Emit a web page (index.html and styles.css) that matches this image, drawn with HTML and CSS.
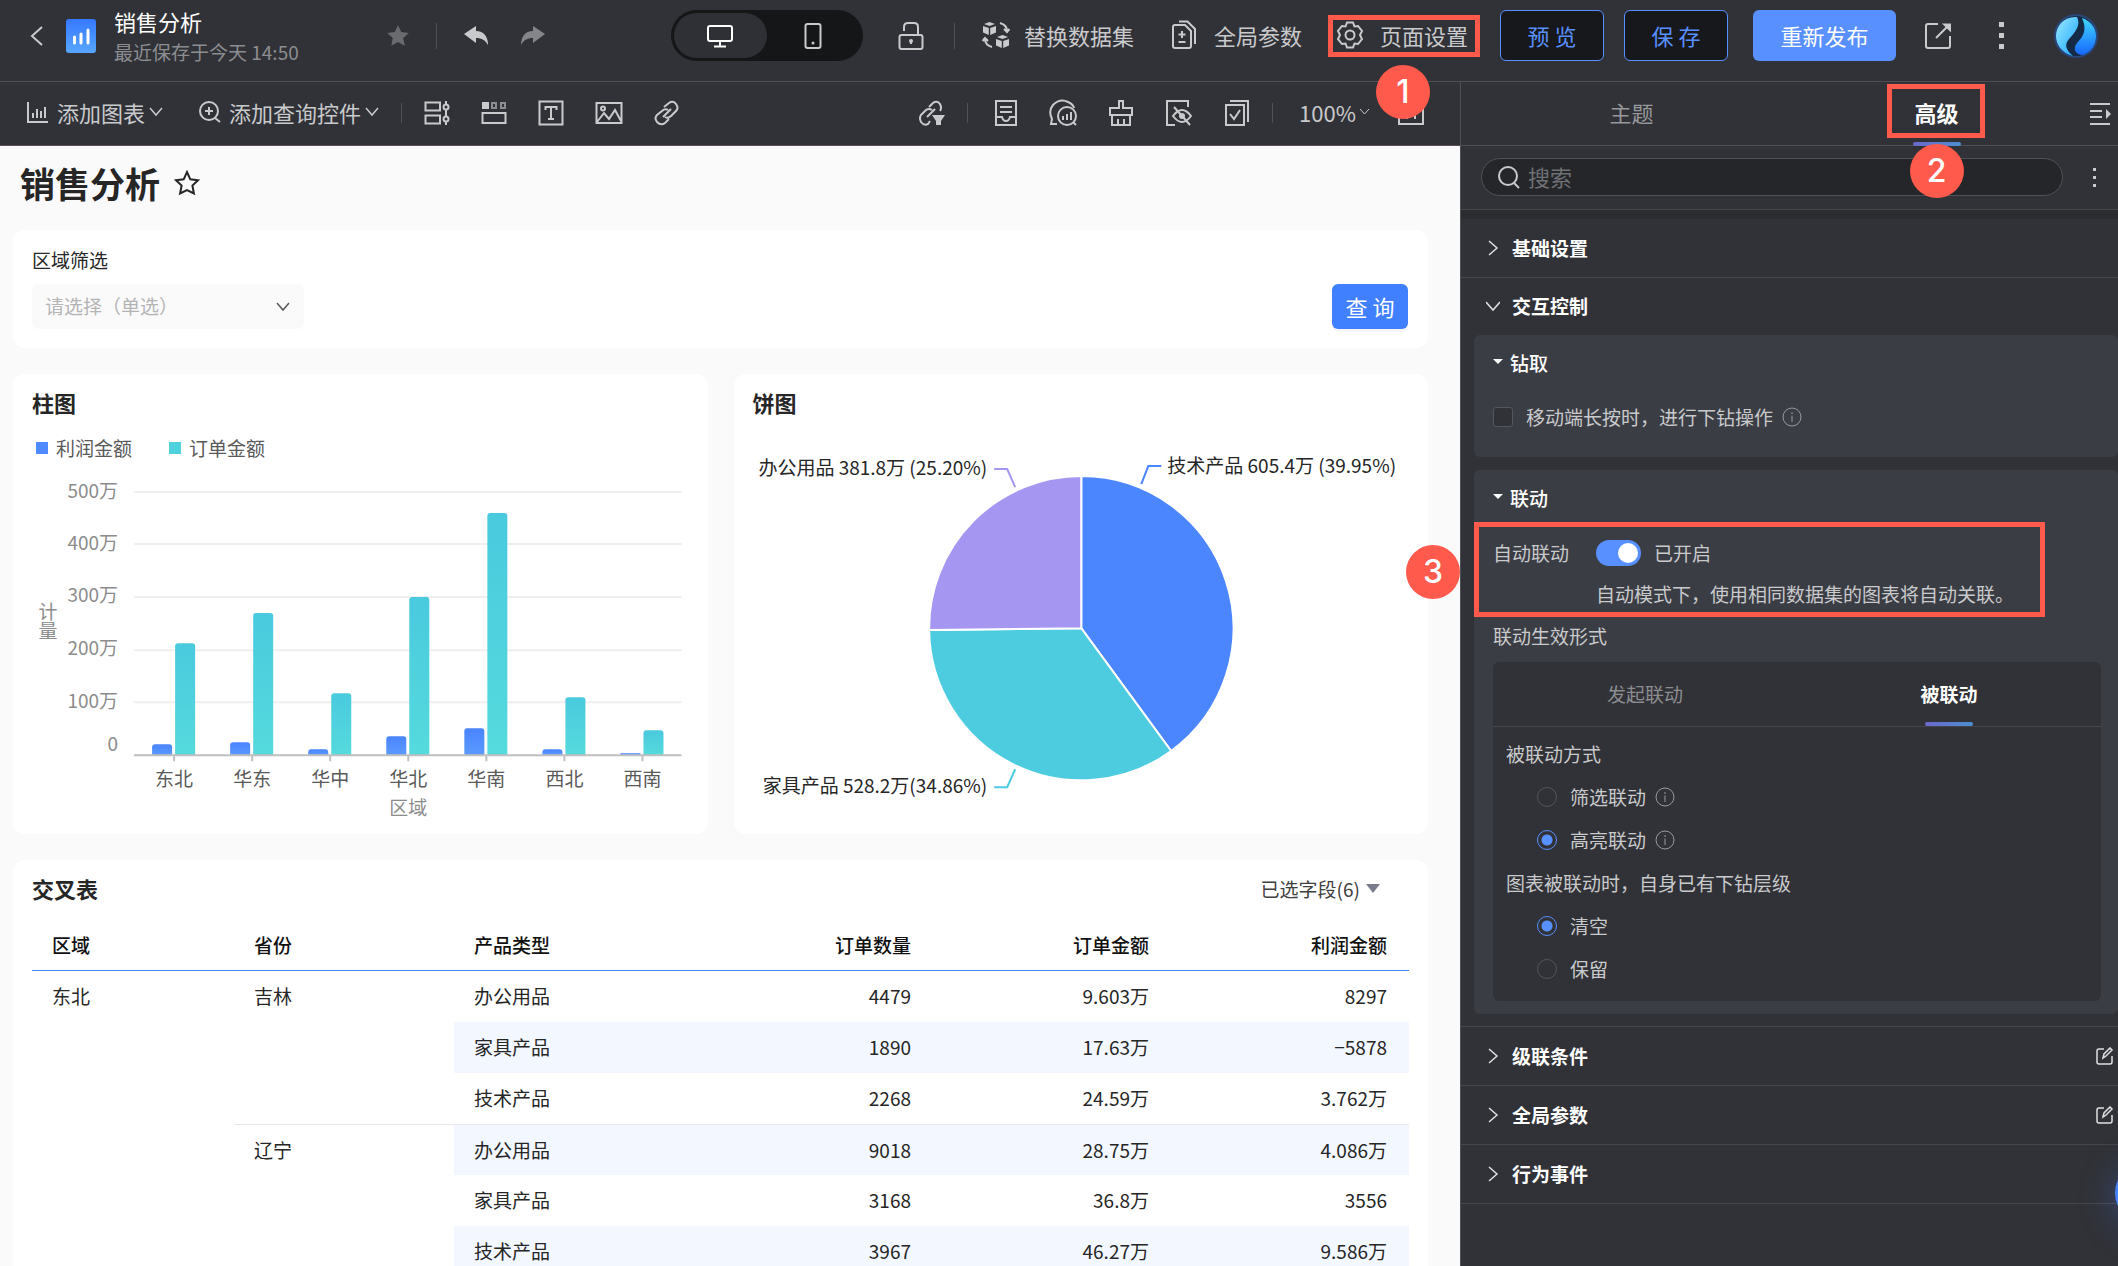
FILE: index.html
```html
<!DOCTYPE html>
<html lang="zh-CN">
<head>
    <meta charset="UTF-8">
    <meta name="viewport" content="width=device-width, initial-scale=1.0">
    <title>销售分析</title>
    <link rel="stylesheet" href="styles.css">
</head>
<body>

    <header class="header">
        <div class="header-left">
            <button class="icon-btn back" aria-label="返回">
                <svg width="14" height="22" viewBox="0 0 14 22"><path d="M12 2 2 11l10 9"/></svg>
            </button>
            <svg class="app-logo" width="30" height="34" viewBox="0 0 30 34">
                <defs>
                    <linearGradient id="logoFill" x1="0" y1="0" x2="0" y2="1">
                        <stop offset="0" stop-color="#3678ff"/>
                        <stop offset="1" stop-color="#57a6ff"/>
                    </linearGradient>
                </defs>
                <rect width="30" height="34" rx="3" fill="url(#logoFill)" stroke="none"/>
                <path d="M8.500 18v6M15 15v9M22 11v13" stroke="#fff" stroke-width="3" stroke-linecap="round"/>
            </svg>
            <div class="doc">
                <div class="doc-name">销售分析</div>
                <div class="doc-time">最近保存于今天 14:50</div>
            </div>
            <button class="icon-btn star" aria-label="收藏">
                <svg width="24" height="24" viewBox="0 0 24 24"><path class="solid" d="m12 1 3.200 7 7.600.900-5.600 5.200 1.500 7.600L12 18l-6.700 3.700 1.500-7.600L1.200 8.900l7.600-.900z"/></svg>
            </button>
            <span class="divider"></span>
            <button class="icon-btn undo" aria-label="撤销">
                <svg width="26" height="22" viewBox="0 0 26 22"><path class="solid" d="M1 9 13 1v5c8 0 12 6 12 14-3-5-6-7-12-7v5z"/></svg>
            </button>
            <button class="icon-btn redo" aria-label="重做" disabled>
                <svg width="26" height="22" viewBox="0 0 26 22"><path class="solid" d="M25 9 13 1v5C5 6 1 12 1 20c3-5 6-7 12-7v5z"/></svg>
            </button>
        </div>

        <div class="device-switch">
            <button class="device active" aria-label="电脑">
                <svg width="28" height="24" viewBox="0 0 28 24"><rect x="2" y="2" width="24" height="15" rx="2"/><path d="M14 17v5M8 22.500h12"/></svg>
            </button>
            <button class="device" aria-label="手机">
                <svg width="18" height="28" viewBox="0 0 18 28"><rect x="1.500" y="2" width="15" height="24" rx="2"/><circle class="solid" cx="9" cy="21" r="1.500"/></svg>
            </button>
        </div>

        <button class="icon-btn lock" aria-label="锁定">
            <svg width="26" height="30" viewBox="0 0 26 30"><rect x="1.500" y="14" width="23" height="14" rx="2"/><path d="M6 10V6q0-4 4-4h6q4 0 4 4v8M13 19v4"/><circle class="solid" cx="13" cy="20" r="2"/></svg>
        </button>
        <span class="divider"></span>

        <button class="header-btn dataset">
            <svg width="28" height="28" viewBox="0 0 28 28">
                <path class="solid" d="m7.500 1 5.500 2-5.500 2L2 3zM1 5l5.800 2v7L1 11.500zM14 5 8.200 7v7l5.800-2.500zM20.500 14l5.500 2-5.500 2-5.500-2zM14 18l5.800 2v7L14 24.500zM27 18l-5.800 2v7l5.800-2.500z"/>
                <path d="M18 2q7 2 7 8M22 8l3 3 2.500-3M10 26q-7-2-7-8M.500 20 3 17l3 3"/>
            </svg>
            替换数据集
        </button>
        <button class="header-btn params">
            <svg width="28" height="30" viewBox="0 0 28 30"><path d="M7 5h8l6 6v15q0 2-2 2H5q-2 0-2-2V7q0-2 2-2zM9 1.500h8.500L25 9v15M12 11v7M8.500 14.500h7M8.500 22h7"/></svg>
            全局参数
        </button>
        <button class="header-btn page-setting">
            <svg width="28" height="28" viewBox="0 0 28 28"><path d="M11 1.500h6l1.500 4 3.500-.500 4 5-2 4 2 4-4 5-3.500-.500-1.500 4h-6l-1.500-4L6 23l-4-5 2-4-2-4 4-5 3.500.500z"/><circle cx="14" cy="14" r="4.500"/></svg>
            页面设置
            <span class="mark-box"></span>
            <span class="mark-num">1</span>
        </button>

        <button class="btn outline">预 览</button>
        <button class="btn outline save">保 存</button>
        <button class="btn primary">重新发布</button>

        <button class="icon-btn export" aria-label="打开">
            <svg width="28" height="28" viewBox="0 0 28 28"><path d="M14 2H4Q2 2 2 4v20q0 2 2 2h20q2 0 2-2V14M12 16 25 3"/><path class="solid" d="M18 1.500h9v9z"/></svg>
        </button>
        <button class="icon-btn more" aria-label="更多">
            <svg width="6" height="30" viewBox="0 0 6 30"><path class="solid" d="M0 1h5v5H0zM0 12h5v5H0zM0 23h5v5H0z"/></svg>
        </button>
        <svg class="avatar" width="44" height="46" viewBox="0 0 44 46">
            <defs>
                <linearGradient id="avatarA" x1="0" y1="0" x2="1" y2="1">
                    <stop offset="0" stop-color="#9beaff"/>
                    <stop offset="1" stop-color="#16a3ff"/>
                </linearGradient>
                <linearGradient id="avatarB" x1="0" y1="0" x2="0" y2="1">
                    <stop offset="0" stop-color="#3fd6ff"/>
                    <stop offset="1" stop-color="#1766ff"/>
                </linearGradient>
            </defs>
            <circle cx="22" cy="23" r="22" fill="#29477c" stroke="none"/>
            <circle cx="22" cy="23" r="20" fill="#152a45" stroke="none"/>
            <path d="M23 4C11 3 2 12 2 23c0 9 6 17 17 20-7-6-9-11-4-17 7-7 12-15 8-22z" fill="url(#avatarA)" stroke="none"/>
            <path d="M28 5c9 3 14 10 14 18 0 9-5 16-13 19-7 0-11-6-6-12 7-7 10-14 5-25z" fill="url(#avatarB)" stroke="none"/>
        </svg>
    </header>

    <div class="workspace">
        <main class="editor">
            <div class="toolbar">
                <button class="tool-btn">
                    <svg width="22" height="24" viewBox="0 0 22 24"><path d="M1 2v20h20M6 13v5M10 9v9M14 11v7M18 7v11"/></svg>
                    添加图表
                    <svg class="caret" width="14" height="10" viewBox="0 0 14 10"><path d="m1 1 6 7 6-7"/></svg>
                </button>
                <button class="tool-btn query">
                    <svg width="22" height="24" viewBox="0 0 22 24"><circle cx="10" cy="11" r="9"/><path d="m16 18 5 4M10 7v8M6 11h8"/></svg>
                    添加查询控件
                    <svg class="caret" width="14" height="10" viewBox="0 0 14 10"><path d="m1 1 6 7 6-7"/></svg>
                </button>
                <span class="divider small"></span>
                <div class="tools">
                    <button class="icon-btn" aria-label="控件组">
                        <svg width="26" height="26" viewBox="0 0 26 26"><path d="M1.500 2.500H16v8H1.500zM1.500 15.500H16v8H1.500zM22 1v24"/><circle class="knob" cx="22" cy="7" r="2.500"/><circle class="knob" cx="22" cy="19" r="2.500"/></svg>
                    </button>
                    <button class="icon-btn" aria-label="标签页">
                        <svg width="26" height="26" viewBox="0 0 26 26"><path class="solid" d="M1 2h7v7H1z"/><path class="dim" d="M11 3h4v5h-4zM20 3h4v5h-4z"/><path d="M1.500 13h23v10h-23z"/></svg>
                    </button>
                    <button class="icon-btn" aria-label="文本">
                        <svg width="26" height="26" viewBox="0 0 26 26"><path d="M1.500 1.500h23v23h-23zM7.500 10V7h11v3M13 7v12M10 19h6"/></svg>
                    </button>
                    <button class="icon-btn" aria-label="图片">
                        <svg width="28" height="26" viewBox="0 0 28 26"><path d="M1.500 3h25v20h-25zM2 22l7-9 5 6 6-9 6 11"/><circle cx="8" cy="8.500" r="2"/></svg>
                    </button>
                    <button class="icon-btn" aria-label="链接">
                        <svg width="26" height="26" viewBox="0 0 26 26"><path d="m10 7 5-4q4-3 7 1 3 4 0 7l-5 5q-3 3-6 1M15 19l-4 4q-4 3-8-1-3-4 0-7l5-4q3-3 6-1M9 17l8-8"/></svg>
                    </button>
                </div>

                <div class="tools right">
                    <button class="icon-btn" aria-label="联动过滤">
                        <svg width="26" height="26" viewBox="0 0 26 26"><path d="m10 7 4-4q4-3 7 1 2 4 0 7M11 21l-2 3q-4 2-7-2-2-4 0-7l5-5q3-2 6 0M8 17l8-8"/><path class="solid" d="M13 15h13l-4 6v4h-5v-4z"/></svg>
                    </button>
                    <span class="divider small"></span>
                    <button class="icon-btn" aria-label="收件">
                        <svg width="24" height="28" viewBox="0 0 24 28"><path d="M2 2h20v24H2zM6 8h12M6 13h12M2 18h6q1 4 4 4t4-4h6"/></svg>
                    </button>
                    <button class="icon-btn" aria-label="智能分析">
                        <svg width="28" height="28" viewBox="0 0 28 28"><path d="M8 25H2l1-5Q-1 12 4 6q7-7 15-3 5 2 6 6"/><circle cx="18" cy="17" r="9"/><path d="m24 23 3 3M14 17v4M18 15v6M22 13v8"/></svg>
                    </button>
                    <button class="icon-btn" aria-label="清除">
                        <svg width="26" height="28" viewBox="0 0 26 28"><path d="M11 9V2h4v7h9v7H2V9zM4 16v10h18V16M10 20v6M16 20v6"/></svg>
                    </button>
                    <button class="icon-btn" aria-label="隐藏">
                        <svg width="28" height="28" viewBox="0 0 28 28"><path d="M10 26H2V2h21v6M8 17q9-12 18 0-9 12-18 0zM9 8l16 18"/><circle class="solid" cx="17" cy="17" r="3"/></svg>
                    </button>
                    <button class="icon-btn" aria-label="多选">
                        <svg width="26" height="28" viewBox="0 0 26 28"><path d="M2 6h18v20H2zM6 2h18v21M6 15l4 5 6-9"/></svg>
                    </button>
                    <span class="divider small"></span>
                    <button class="zoom">100%<svg width="11" height="8" viewBox="0 0 11 8"><path d="m1 1 4.500 5L10 1"/></svg></button>
                    <button class="icon-btn" aria-label="网格">
                        <svg width="26" height="24" viewBox="0 0 26 24"><path d="M1 1h24v22H1zM9 8v10M17 8v10"/></svg>
                    </button>
                </div>
            </div>

            <div class="canvas">
                <div class="page-title">
                    <h1>销售分析</h1>
                    <svg width="26" height="26" viewBox="0 0 26 26"><path d="m13 2 3.300 7.300 7.700.900-5.600 5.300 1.500 8L13 20l-6.900 3.500 1.500-8L2 10.200l7.700-.900z"/></svg>
                </div>

                <section class="card filter">
                    <div>
                        <label for="region">区域筛选</label>
                        <div class="select">
                            <select id="region"><option>请选择（单选）</option></select>
                            <svg width="14" height="10" viewBox="0 0 14 10"><path d="m1 1 6 7 6-7"/></svg>
                        </div>
                    </div>
                    <button class="btn-query">查 询</button>
                </section>

                <div class="charts">
                    <section class="card">
                        <h2>柱图</h2>
                        <div class="legend">
                            <span class="legend-item profit">利润金额</span>
                            <span class="legend-item order">订单金额</span>
                        </div>
                        <svg class="chart" viewBox="0 0 656 352">
                            <defs>
                                <linearGradient id="profit" x1="0" y1="0" x2="0" y2="1">
                                    <stop offset="0" stop-color="#4a84ff"/>
                                    <stop offset="1" stop-color="#5b9aff"/>
                                </linearGradient>
                                <linearGradient id="order" x1="0" y1="0" x2="0" y2="1">
                                    <stop offset="0" stop-color="#4acade"/>
                                    <stop offset="1" stop-color="#55dadd"/>
                                </linearGradient>
                            </defs>
                            <path class="grid" d="M102 22h547M102 74h547M102 127h547M102 180h547M102 232h547"/>
                            <g fill="url(#profit)">
                                <path d="M120 285v-8q0-3 3-3h14q3 0 3 3v8z"/>
                                <path d="M198 285v-10q0-3 3-3h14q3 0 3 3v10z"/>
                                <path d="M276 285v-3q0-3 3-3h14q3 0 3 3v3z"/>
                                <path d="M354 285v-16q0-3 3-3h14q3 0 3 3v16z"/>
                                <path d="M432 285v-24q0-3 3-3h14q3 0 3 3v24z"/>
                                <path d="M510 285v-3q0-3 3-3h14q3 0 3 3v3z"/>
                                <path d="M588 285v-2h20v2z"/>
                            </g>
                            <g fill="url(#order)">
                                <path d="M143 285V176q0-3 3-3h14q3 0 3 3v109z"/>
                                <path d="M221 285V146q0-3 3-3h14q3 0 3 3v139z"/>
                                <path d="M299 285v-59q0-3 3-3h14q3 0 3 3v59z"/>
                                <path d="M377 285V130q0-3 3-3h14q3 0 3 3v155z"/>
                                <path d="M455 285V46q0-3 3-3h14q3 0 3 3v239z"/>
                                <path d="M533 285v-55q0-3 3-3h14q3 0 3 3v55z"/>
                                <path d="M611 285v-22q0-3 3-3h14q3 0 3 3v22z"/>
                            </g>
                            <path class="axis" d="M102 285h547M142 285v6M220 285v6M298 285v6M376 285v6M454 285v6M532 285v6M610 285v6"/>
                            <g class="y-label">
                                <text x="86" y="28">500万</text>
                                <text x="86" y="80">400万</text>
                                <text x="86" y="132">300万</text>
                                <text x="86" y="185">200万</text>
                                <text x="86" y="238">100万</text>
                                <text x="86" y="281">0</text>
                            </g>
                            <g class="x-label">
                                <text x="142" y="316">东北</text>
                                <text x="220" y="316">华东</text>
                                <text x="298" y="316">华中</text>
                                <text x="376" y="316">华北</text>
                                <text x="454" y="316">华南</text>
                                <text x="532" y="316">西北</text>
                                <text x="610" y="316">西南</text>
                            </g>
                            <g class="axis-title">
                                <text x="376" y="345">区域</text>
                                <text x="16" y="149">计<tspan x="16" dy="19">量</tspan></text>
                            </g>
                        </svg>
                    </section>

                    <section class="card">
                        <h2>饼图</h2>
                        <svg class="chart pie" viewBox="0 0 656 398">
                            <g class="slices">
                                <path fill="#4b86ff" d="M328 204V52A152 152 0 0 1 417.800 326.700z"/>
                                <path fill="#4dcbdf" d="M328 204l89.800 122.700A152 152 0 0 1 176 205.900z"/>
                                <path fill="#a596f2" d="M328 204l-152 1.900A152 152 0 0 1 328 52z"/>
                            </g>
                            <path class="lead office" d="M241 45h13l8 18"/>
                            <path class="lead tech" d="M388 60l7-18h13"/>
                            <path class="lead furniture" d="M241 363h13l8-18"/>
                            <text x="234" y="51" text-anchor="end">办公用品 381.8万 (25.20%)</text>
                            <text x="414" y="49">技术产品 605.4万 (39.95%)</text>
                            <text x="234" y="369" text-anchor="end">家具产品 528.2万(34.86%)</text>
                        </svg>
                    </section>
                </div>

                <section class="card cross">
                    <div class="cross-head">
                        <h2>交叉表</h2>
                        <button class="fields">已选字段(6)</button>
                    </div>
                    <table>
                        <colgroup>
                            <col class="c-region"><col class="c-province"><col><col><col class="c-num"><col class="c-num">
                        </colgroup>
                        <thead>
                            <tr>
                                <th>区域</th>
                                <th>省份</th>
                                <th>产品类型</th>
                                <th class="num">订单数量</th>
                                <th class="num">订单金额</th>
                                <th class="num">利润金额</th>
                            </tr>
                        </thead>
                        <tbody>
                            <tr>
                                <td rowspan="6">东北</td>
                                <td rowspan="3">吉林</td>
                                <td>办公用品</td>
                                <td class="num">4479</td>
                                <td class="num">9.603万</td>
                                <td class="num">8297</td>
                            </tr>
                            <tr class="odd">
                                <td>家具产品</td>
                                <td class="num">1890</td>
                                <td class="num">17.63万</td>
                                <td class="num">−5878</td>
                            </tr>
                            <tr>
                                <td>技术产品</td>
                                <td class="num">2268</td>
                                <td class="num">24.59万</td>
                                <td class="num">3.762万</td>
                            </tr>
                            <tr class="odd group">
                                <td rowspan="3" class="plain">辽宁</td>
                                <td>办公用品</td>
                                <td class="num">9018</td>
                                <td class="num">28.75万</td>
                                <td class="num">4.086万</td>
                            </tr>
                            <tr>
                                <td>家具产品</td>
                                <td class="num">3168</td>
                                <td class="num">36.8万</td>
                                <td class="num">3556</td>
                            </tr>
                            <tr class="odd">
                                <td>技术产品</td>
                                <td class="num">3967</td>
                                <td class="num">46.27万</td>
                                <td class="num">9.586万</td>
                            </tr>
                        </tbody>
                    </table>
                </section>
            </div>
        </main>

        <aside class="panel">
            <div class="panel-tabs">
                <button class="panel-tab">主题</button>
                <button class="panel-tab active">
                    高级
                    <span class="mark-box"></span>
                    <span class="mark-num">2</span>
                </button>
                <button class="icon-btn collapse" aria-label="收起">
                    <svg width="22" height="24" viewBox="0 0 22 24"><path d="M1 2h20M1 9h12M1 15h12M1 22h20"/><path class="solid" d="m17 7 5 5-5 5z"/></svg>
                </button>
            </div>

            <div class="search-row">
                <div class="search">
                    <svg width="24" height="24" viewBox="0 0 24 24"><circle cx="11" cy="11" r="9"/><path d="m17 18 5 5"/></svg>
                    <input type="text" placeholder="搜索" aria-label="搜索">
                </div>
                <button class="icon-btn" aria-label="更多">
                    <svg width="4" height="20" viewBox="0 0 4 20"><path class="solid" d="M0 1h3v3H0zM0 9h3v3H0zM0 17h3v3H0z"/></svg>
                </button>
            </div>

            <div class="sections">
                <button class="section-head">
                    <svg width="14" height="16" viewBox="0 0 14 16"><path d="m3 1 8 7-8 7"/></svg>
                    基础设置
                </button>

                <div class="section-open">
                    <button class="section-head">
                        <svg width="14" height="16" viewBox="0 0 14 16"><path d="m0 4 7 8 7-8"/></svg>
                        交互控制
                    </button>

                    <div class="box drill">
                        <h3>钻取</h3>
                        <label class="check">
                            <input type="checkbox">
                            移动端长按时，进行下钻操作
                            <svg class="info" width="20" height="20" viewBox="0 0 20 20"><circle cx="10" cy="10" r="9"/><path d="M10 8.500V15M10 5v2"/></svg>
                        </label>
                    </div>

                    <div class="box link">
                        <h3>联动</h3>
                        <div class="auto-link">
                            <label for="auto">自动联动</label>
                            <div>
                                <div class="switch-row">
                                    <input type="checkbox" class="switch" id="auto" checked>
                                    <span>已开启</span>
                                </div>
                                <p>自动模式下，使用相同数据集的图表将自动关联。</p>
                            </div>
                            <span class="mark-box"></span>
                            <span class="mark-num">3</span>
                        </div>
                        <div class="form-label">联动生效形式</div>

                        <div class="link-card">
                            <div class="link-tabs">
                                <button class="link-tab">发起联动</button>
                                <button class="link-tab active">被联动</button>
                            </div>
                            <div class="link-body">
                                <div class="group-label">被联动方式</div>
                                <label class="radio">
                                    <input type="radio" name="mode">
                                    筛选联动
                                    <svg class="info" width="20" height="20" viewBox="0 0 20 20"><circle cx="10" cy="10" r="9"/><path d="M10 8.500V15M10 5v2"/></svg>
                                </label>
                                <label class="radio">
                                    <input type="radio" name="mode" checked>
                                    高亮联动
                                    <svg class="info" width="20" height="20" viewBox="0 0 20 20"><circle cx="10" cy="10" r="9"/><path d="M10 8.500V15M10 5v2"/></svg>
                                </label>
                                <div class="group-label">图表被联动时，自身已有下钻层级</div>
                                <label class="radio">
                                    <input type="radio" name="level" checked>
                                    清空
                                </label>
                                <label class="radio">
                                    <input type="radio" name="level">
                                    保留
                                </label>
                            </div>
                        </div>
                    </div>
                </div>

                <button class="section-head">
                    <svg width="14" height="16" viewBox="0 0 14 16"><path d="m3 1 8 7-8 7"/></svg>
                    级联条件
                    <svg class="edit" width="18" height="18" viewBox="0 0 18 18"><path d="M8 2H3Q1 2 1 4v11q0 2 2 2h11q2 0 2-2V9M7 11l1-4 6-6 2 2-6 6z"/></svg>
                </button>
                <button class="section-head">
                    <svg width="14" height="16" viewBox="0 0 14 16"><path d="m3 1 8 7-8 7"/></svg>
                    全局参数
                    <svg class="edit" width="18" height="18" viewBox="0 0 18 18"><path d="M8 2H3Q1 2 1 4v11q0 2 2 2h11q2 0 2-2V9M7 11l1-4 6-6 2 2-6 6z"/></svg>
                </button>
                <button class="section-head">
                    <svg width="14" height="16" viewBox="0 0 14 16"><path d="m3 1 8 7-8 7"/></svg>
                    行为事件
                </button>
            </div>
            <button class="helper" aria-label="助手"></button>
        </aside>
    </div>

</body>
</html>
```
FILE: styles.css
```css
* {
    box-sizing: border-box;
}
body {
    margin: 0;
    height: 100vh;
    display: flex;
    flex-direction: column;
    overflow: hidden;
    font-family: "Noto Sans CJK SC", sans-serif;
    font-size: 19px;
    line-height: 28px;
    color: #262626;
    background-color: #313237;
}
button, input, select {
    font: inherit;
    color: inherit;
}
button {
    margin: 0;
    padding: 0;
    border: none;
    background: none;
    cursor: pointer;
}
h1, h2, h3, p {
    margin: 0;
}
svg {
    display: block;
    flex: none;
    fill: none;
    stroke: currentColor;
    stroke-width: 2;
}
svg .solid {
    fill: currentColor;
    stroke: none;
}
svg .dim {
    opacity: 0.6;
}
.icon-btn {
    display: flex;
    align-items: center;
    justify-content: center;
    color: #c9cacc;
}
.divider {
    flex: none;
    width: 1px;
    height: 26px;
    background-color: #505156;
}
.divider.small {
    height: 20px;
}

/* header */
.header {
    display: flex;
    align-items: center;
    flex: none;
    height: 82px;
    padding: 0 20px 10px 30px;
    border-bottom: 1px solid #505156;
    font-size: 22px;
    color: #c9cacc;
}
.header-left {
    display: flex;
    align-items: center;
    flex: 1;
}
.app-logo {
    margin: 0 18px 0 22px;
}
.doc {
    width: 272px;
    white-space: nowrap;
}
.doc-name {
    line-height: 30px;
    color: #fff;
}
.doc-time {
    padding-top: 2px;
    font-size: 19px;
    color: #8c8d90;
}
.icon-btn.star {
    color: #6a6b6f;
    margin-right: 26px;
}
.undo {
    margin: 0 31px 0 26px;
}
.redo {
    color: #85868a;
}
.device-switch {
    display: flex;
    width: 192px;
    height: 51px;
    padding: 3px;
    border-radius: 26px;
    background-color: #151618;
}
.device {
    display: flex;
    flex: 1;
    align-items: center;
    justify-content: center;
    border-radius: 23px;
}
.device.active {
    color: #fff;
    background-color: #2f3035;
}
.lock {
    margin: 0 30px 0 35px;
}
.header-btn {
    display: flex;
    align-items: center;
    gap: 16px;
    position: relative;
    padding-bottom: 2px;
    white-space: nowrap;
}
.dataset {
    gap: 14px;
    margin-left: 27px;
}
.params {
    margin: 0 34px 0 36px;
}
.btn {
    height: 51px;
    width: 104px;
    padding-bottom: 2px;
    border-radius: 6px;
    white-space: nowrap;
}
.btn.outline {
    margin-left: 32px;
    border: 1px solid #5990ff;
    background-color: #17181b;
    color: #5990ff;
}
.btn.save {
    margin-left: 20px;
}
.btn.primary {
    width: 143px;
    margin-left: 25px;
    background-color: #5990ff;
    color: #fff;
}
.export {
    margin: 0 47px 0 28px;
}
.more {
    margin-right: 49px;
}

/* numbered callouts */
.mark-box {
    position: absolute;
    border: 5px solid #ff5a4b;
    pointer-events: none;
}
.mark-num {
    position: absolute;
    z-index: 2;
    width: 54px;
    height: 54px;
    border-radius: 50%;
    background-color: #ff5a4b;
    color: #fff;
    font: 500 32px/54px Inter, sans-serif;
    text-align: center;
}
.page-setting .mark-box {
    inset: -6px -12px -6px -8px;
}
.page-setting .mark-num {
    left: 40px;
    top: 44px;
}

.workspace {
    display: flex;
    flex: 1;
    min-height: 0;
}
.editor {
    flex: 1;
    min-width: 0;
    display: flex;
    flex-direction: column;
}

/* toolbar */
.toolbar {
    display: flex;
    align-items: center;
    flex: none;
    height: 64px;
    padding: 0 36px 2px 27px;
    border-bottom: 1px solid #5b505a;
    color: #c9cacc;
    font-size: 22px;
}
.tool-btn {
    display: flex;
    align-items: center;
    gap: 8px;
    padding-bottom: 2px;
    white-space: nowrap;
}
.caret, .select svg, .section-head svg {
    stroke-width: 1.5;
}
.tool-btn .caret {
    margin-left: -4px;
}
.tool-btn.query {
    margin: 0 22px 0 36px;
}
.tools {
    display: flex;
    align-items: center;
    gap: 31px;
    margin-left: 22px;
}
.tools.right {
    margin-left: auto;
}
.tools.right .divider {
    margin: 0 -5px 0 -9px;
}
.knob {
    fill: #313237;
}
.zoom {
    display: flex;
    align-items: center;
    gap: 3px;
    margin-right: -3px;
    padding-bottom: 2px;
}
.zoom svg {
    stroke-width: 1;
}

/* canvas */
.canvas {
    flex: 1;
    min-height: 0;
    overflow: hidden;
    display: flex;
    flex-direction: column;
    gap: 26px;
    padding: 14px 32px 0 13px;
    background-color: #fafafa;
}
.page-title {
    display: flex;
    align-items: center;
    gap: 14px;
    height: 44px;
    padding: 2px 0 0 7px;
}
h1 {
    font-size: 35px;
    line-height: 44px;
    font-weight: 600;
}
h2 {
    font-size: 22px;
    line-height: 30px;
    font-weight: 600;
}
.card {
    flex: none;
    padding: 13px 19px 12px;
    border-radius: 12px;
    background-color: #fff;
}
.filter {
    display: flex;
    justify-content: space-between;
    align-items: flex-end;
    padding: 16px 20px 19px 19px;
}
.filter label {
    display: block;
    margin-bottom: 10px;
}
.select {
    position: relative;
    width: 272px;
}
.select select {
    appearance: none;
    display: block;
    width: 100%;
    height: 45px;
    padding: 0 13px 2px;
    border: none;
    border-radius: 6px;
    background-color: #fafafa;
    color: #b4b4b4;
}
.select svg {
    position: absolute;
    right: 14px;
    top: 18px;
    color: #595959;
    pointer-events: none;
}
.btn-query {
    width: 76px;
    height: 45px;
    padding-bottom: 2px;
    border-radius: 6px;
    background-color: #4080ff;
    box-shadow: 0 3px 0 rgba(0, 0, 0, 0.04);
    color: #fff;
    font-size: 22px;
}
.charts {
    display: grid;
    grid-template-columns: 1fr 1fr;
    gap: 26px;
}
.legend {
    display: flex;
    gap: 37px;
    margin: 17px 0 8px 4px;
    color: #595959;
}
.legend-item {
    display: flex;
    align-items: center;
    gap: 8px;
}
.legend-item::before {
    content: "";
    width: 12px;
    height: 12px;
    background-color: #4f8bff;
}
.legend-item.order::before {
    background-color: #50d2de;
}
.chart {
    width: 100%;
}
.chart.pie {
    margin-top: 7px;
}
.chart * {
    stroke: none;
}
.chart text {
    fill: #262626;
    font-size: 19px;
}
.chart .grid {
    stroke: #efefef;
}
.chart .axis {
    stroke: #bfbfbf;
}
.chart .y-label text {
    fill: #8c8c8c;
    text-anchor: end;
}
.chart .x-label text {
    fill: #595959;
    text-anchor: middle;
}
.chart .axis-title text {
    fill: #8c8c8c;
    text-anchor: middle;
}
.slices path {
    stroke: #fff;
    stroke-width: 2;
}
.lead.office {
    stroke: #a596f2;
}
.lead.tech {
    stroke: #4b86ff;
}
.lead.furniture {
    stroke: #4dcbdf;
}

/* cross table */
.cross-head {
    display: flex;
    justify-content: space-between;
    align-items: center;
    padding-right: 29px;
}
.fields {
    display: flex;
    align-items: center;
    gap: 6px;
    padding-top: 1px;
    color: #404040;
}
.fields::after {
    content: "";
    border: 7px solid transparent;
    border-top: 9px solid #7a7c8c;
    border-bottom: none;
}
table {
    width: 100%;
    margin-top: 17px;
    border-collapse: separate;
    border-spacing: 0;
    table-layout: fixed;
}
.c-region {
    width: 202px;
}
.c-province {
    width: 220px;
}
.c-num {
    width: 238px;
}
th, td {
    height: 51px;
    padding: 11px 22px 11px 20px;
    text-align: left;
    vertical-align: top;
    font-weight: 400;
}
th {
    font-weight: 500;
    color: #111;
    border-bottom: 1px solid #4080ff;
}
th.num, td.num {
    text-align: right;
}
.odd td {
    background-color: #f3f7ff;
}
.group td {
    border-top: 1px solid #e6e8ea;
}
.odd td.plain {
    background: none;
}

/* settings panel */
.panel {
    position: relative;
    flex: none;
    width: 658px;
    border-left: 1px solid #505156;
    color: #c9cacc;
}
.panel-tabs {
    display: flex;
    height: 64px;
    padding: 0 7px 0 18px;
    border-bottom: 1px solid #505156;
}
.panel-tab {
    position: relative;
    flex: 1;
    padding-bottom: 4px;
    color: #97989b;
    font-size: 22px;
}
.panel-tab.active, .link-tab.active {
    color: #fff;
    font-weight: 600;
}
.panel-tab.active::after, .link-tab.active::after {
    content: "";
    position: absolute;
    left: calc(50% - 24px);
    bottom: -1px;
    width: 48px;
    height: 4px;
    border-radius: 2px;
    background: linear-gradient(90deg, #6a68cc, #4d8ed0);
}
.panel-tab .mark-box {
    top: 2px;
    bottom: 7px;
    left: calc(50% - 50px);
    width: 98px;
}
.panel-tab .mark-num {
    left: calc(50% - 27px);
    top: 62px;
}
.search-row {
    display: flex;
    align-items: center;
    gap: 30px;
    height: 64px;
    padding: 0 21px 2px 20px;
    border-bottom: 1px solid #46474c;
}
.search {
    display: flex;
    align-items: center;
    flex: 1;
    gap: 7px;
    height: 38px;
    padding: 0 15px;
    border: 1px solid #505156;
    border-radius: 19px;
    background-color: #24262a;
}
.search input {
    flex: 1;
    min-width: 0;
    padding: 0 0 2px;
    border: none;
    outline: none;
    background: none;
    font-size: 22px;
}
.search input::placeholder {
    color: #6f7073;
}
.sections {
    border-top: 9px solid #2b2c30;
}
.section-head {
    display: flex;
    align-items: center;
    gap: 12px;
    width: 100%;
    height: 59px;
    padding: 0 4px 0 25px;
    border-bottom: 1px solid #46474c;
    color: #fff;
    font-weight: 600;
}
.section-head svg {
    color: #e0e0e2;
}
.section-head .edit {
    margin-left: auto;
}
.section-open {
    padding-bottom: 12px;
    border-bottom: 1px solid #46474c;
}
.section-open .section-head {
    height: 57px;
    padding-bottom: 2px;
    border-bottom: none;
}
.box {
    margin-left: 13px;
    padding: 14px 17px 13px 19px;
    border-radius: 6px;
    background-color: #3b3d44;
}
.box + .box {
    margin-top: 13px;
}
h3 {
    display: flex;
    align-items: center;
    gap: 7px;
    font-size: 19px;
    font-weight: 500;
    color: #fff;
}
h3::before {
    content: "";
    margin-bottom: 4px;
    border: 5px solid transparent;
    border-top-color: #fff;
    border-bottom: none;
}
.drill {
    height: 122px;
}
.check, .radio {
    display: flex;
    align-items: center;
}
.check {
    margin-top: 26px;
    gap: 13px;
}
.info {
    color: #9a9b9e;
    stroke-width: 1;
}
.check .info {
    margin-left: -4px;
}
.check input {
    appearance: none;
    width: 20px;
    height: 20px;
    margin: 0;
    border: 1px solid #55565b;
    border-radius: 3px;
    background-color: #313237;
}
.auto-link {
    position: relative;
    display: flex;
    gap: 27px;
    margin: 27px 0 14px;
}
.switch-row {
    display: flex;
    align-items: center;
    gap: 13px;
    margin-bottom: 13px;
}
.switch {
    appearance: none;
    display: flex;
    justify-content: flex-end;
    width: 45px;
    height: 26px;
    margin: 0;
    padding: 3px;
    border-radius: 13px;
    background-color: #5990ff;
}
.switch::before {
    content: "";
    width: 20px;
    height: 20px;
    border-radius: 50%;
    background-color: #fff;
}
.auto-link .mark-box {
    top: -17px;
    bottom: -9px;
    left: -19px;
    width: 571px;
}
.auto-link .mark-num {
    left: -87px;
    top: 6px;
}
.link-card {
    margin-top: 12px;
    border-radius: 6px;
    background-color: #313237;
}
.link-tabs {
    display: flex;
    height: 65px;
    border-bottom: 1px solid #46474c;
}
.link-tab {
    position: relative;
    flex: 1;
    color: #8c8d90;
}
.link-tab.active::after {
    bottom: 0;
}
.link-body {
    display: flex;
    flex-direction: column;
    gap: 15px;
    padding: 13px 13px 18px;
}
.radio {
    margin-left: 31px;
    gap: 9px;
}
.radio input {
    appearance: none;
    width: 20px;
    height: 20px;
    margin: 0 4px 0 0;
    border: 1px solid #55565b;
    border-radius: 50%;
}
.radio input:checked {
    border-color: #5990ff;
    background: radial-gradient(#5990ff 5px, transparent 6px);
}
.helper {
    position: absolute;
    left: 654px;
    top: 1081px;
    width: 60px;
    height: 60px;
    border-radius: 50%;
    background-color: #4a84ff;
    box-shadow: 0 5px 36px rgba(64, 110, 230, 0.4);
}
```
